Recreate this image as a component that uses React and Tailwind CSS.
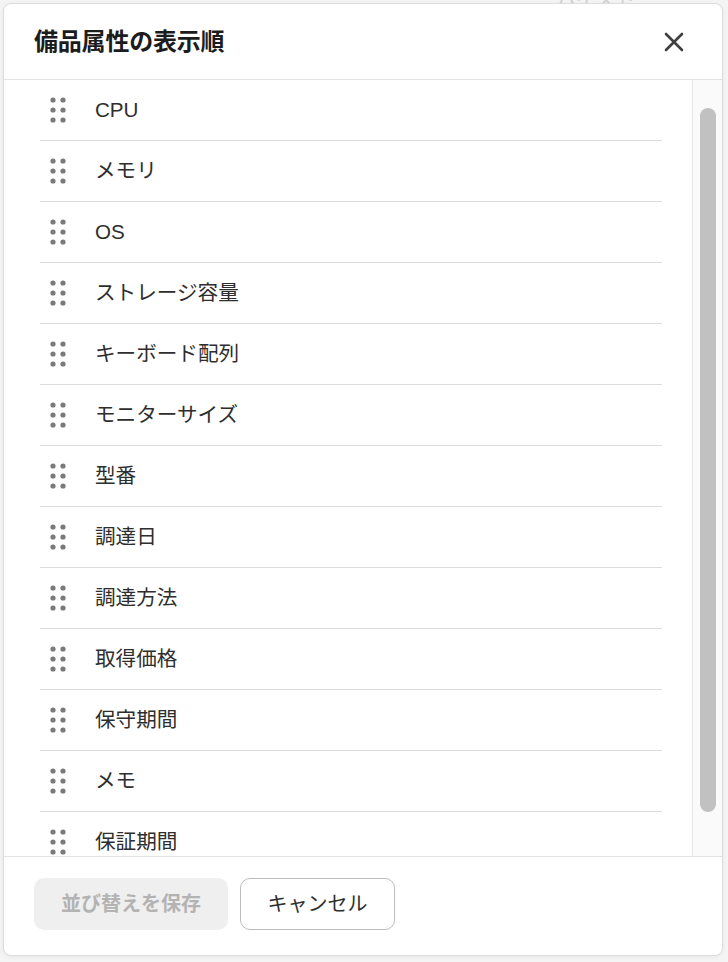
const ITEMS = [
  "CPU",
  "メモリ",
  "OS",
  "ストレージ容量",
  "キーボード配列",
  "モニターサイズ",
  "型番",
  "調達日",
  "調達方法",
  "取得価格",
  "保守期間",
  "メモ",
  "保証期間",
];

function Grip() {
  return (
    <svg width="16" height="26" viewBox="0 0 16 26" className="shrink-0">
      {[3, 13, 23].map((y) =>
        [3, 13].map((x) => <circle key={`${x}-${y}`} cx={x} cy={y} r="2.6" fill="#7a7a7a" />)
      )}
    </svg>
  );
}

function CloseIcon() {
  return (
    <svg width="20" height="20" viewBox="0 0 20 20">
      <path d="M2 2 L18 18 M18 2 L2 18" stroke="#3f3f3f" strokeWidth="2.6" strokeLinecap="round" />
    </svg>
  );
}

export default function App() {
  return (
    <div
      className="relative w-[728px] h-[962px] overflow-hidden bg-[#f4f4f4]"
      style={{ fontFamily: '"Liberation Sans", "Noto Sans CJK JP", sans-serif' }}
    >
      {/* page content behind the dialog */}
      <span className="absolute left-[556px] top-[-15px] text-[20px] text-[#cfcfcf]">ハイスト</span>

      <div className="relative ml-[3px] mt-[3px] w-[720px] h-[953px] bg-white border border-[#dddddd] rounded-[8px] shadow-[0_1px_4px_rgba(0,0,0,0.06)] flex flex-col overflow-hidden">
        {/* Header */}
        <div className="h-[76px] shrink-0 border-b border-[#e3e3e3] flex items-center justify-between pl-[30px] pr-[36px]">
          <h2 className="text-[24px] font-bold text-[#1c1c1c] tracking-[-0.2px]">備品属性の表示順</h2>
          <button className="w-[24px] h-[24px] flex items-center justify-center">
            <CloseIcon />
          </button>
        </div>

        {/* Sortable list + scrollbar */}
        <div className="h-[776px] shrink-0 flex">
          <div className="flex-1 overflow-hidden pl-[36px] pr-[30px]">
            {ITEMS.map((item) => (
              <div
                key={item}
                className="h-[61px] flex items-center gap-[29px] pl-[10px] border-b border-[#dcdcdc] text-[20.6px] text-[#2e2e2e]"
              >
                <Grip />
                <span>{item}</span>
              </div>
            ))}
          </div>
          <div className="w-[30px] shrink-0 bg-[#fafafa] border-l border-[#e6e6e6] pt-[28px] pl-[7px]">
            <div className="w-[16px] h-[704px] rounded-full bg-[#c1c1c1]" />
          </div>
        </div>

        {/* Footer */}
        <div className="flex-1 border-t border-[#e3e3e3] flex items-start gap-[12px] pl-[30px] pt-[21px]">
          <button
            disabled
            className="h-[52px] w-[194px] rounded-[10px] bg-[#efefef] text-[20px] font-bold text-[#b3b3b3]"
          >
            並び替えを保存
          </button>
          <button className="h-[52px] w-[155px] rounded-[10px] bg-white border border-[#bdbdbd] text-[20px] text-[#2e2e2e]">
            キャンセル
          </button>
        </div>
      </div>
    </div>
  );
}
